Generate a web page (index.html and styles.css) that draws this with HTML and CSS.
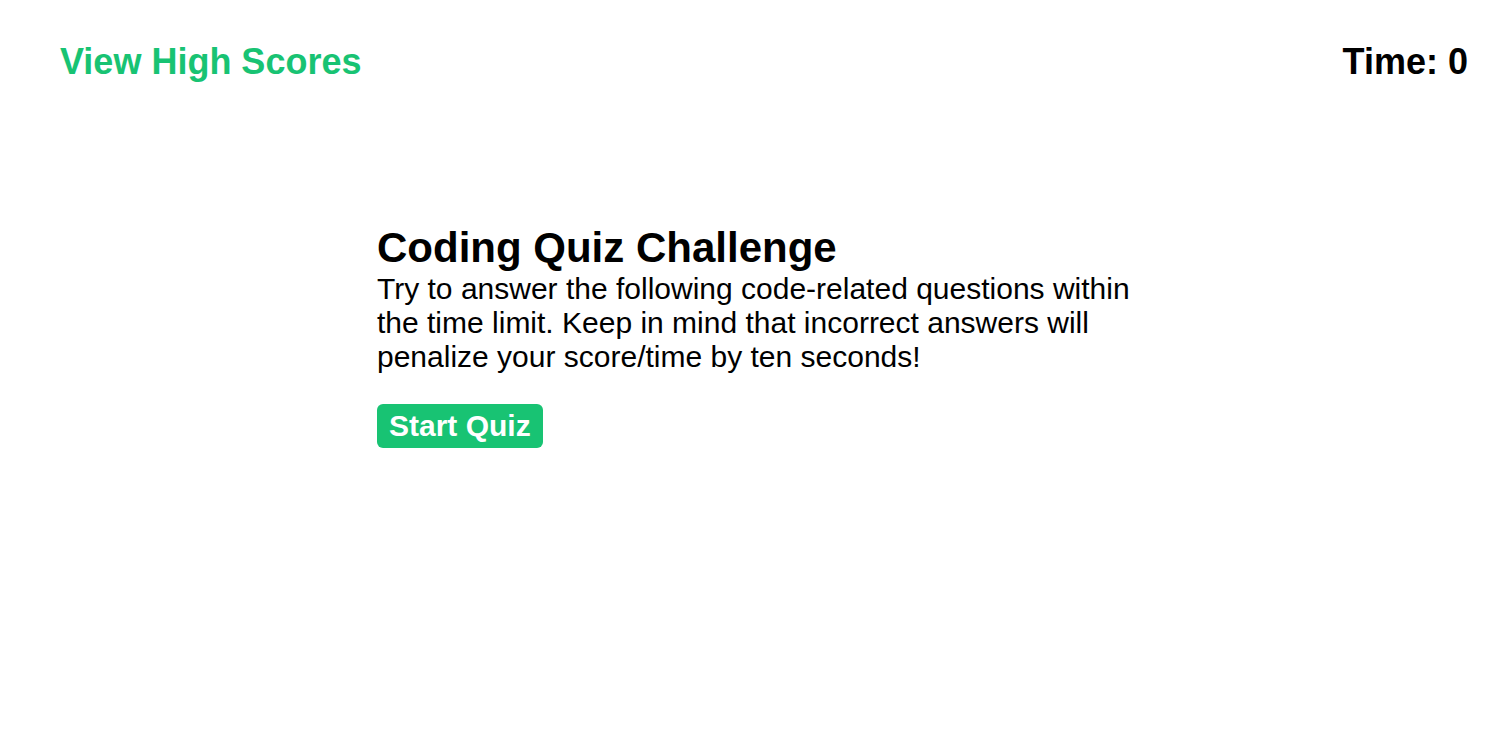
FILE: index.html
```html
<!DOCTYPE html>
<html lang="en">
<head>
<meta charset="utf-8">
<title>Coding Quiz</title>
<link rel="stylesheet" href="styles.css">
</head>
<body>
<header class="top-bar">
  <a class="high-scores" href="#">View High Scores</a>
  <div class="timer">Time: <span class="time-value">0</span></div>
</header>
<main class="quiz">
  <h1 class="quiz-title">Coding Quiz Challenge</h1>
  <p class="quiz-intro">Try to answer the following code-related questions within the time limit. Keep in mind that incorrect answers will penalize your score/time by ten seconds!</p>
  <button class="start-btn" type="button">Start Quiz</button>
</main>
</body>
</html>
```
FILE: styles.css
```css
html, body {
  margin: 0;
  padding: 0;
  background: #ffffff;
  font-family: "Liberation Sans", Arial, sans-serif;
  color: #000000;
}

.top-bar {
  display: flex;
  justify-content: space-between;
  align-items: center;
  padding: 41px 32px 0 60px;
  font-size: 36px;
  font-weight: bold;
}

.high-scores {
  color: #18c373;
  text-decoration: none;
}

.quiz {
  width: 770px;
  margin: 141px 0 0 377px;
}

.quiz-title {
  margin: 0;
  font-size: 42px;
  font-weight: bold;
}

.quiz-intro {
  margin: 0 0 30px 0;
  font-size: 30px;
}

.start-btn {
  font-family: "Liberation Sans", Arial, sans-serif;
  font-size: 30px;
  font-weight: bold;
  color: #ffffff;
  background: #18c373;
  border: none;
  border-radius: 6px;
  padding: 5px 12px;
  line-height: normal;
  cursor: pointer;
}
```
